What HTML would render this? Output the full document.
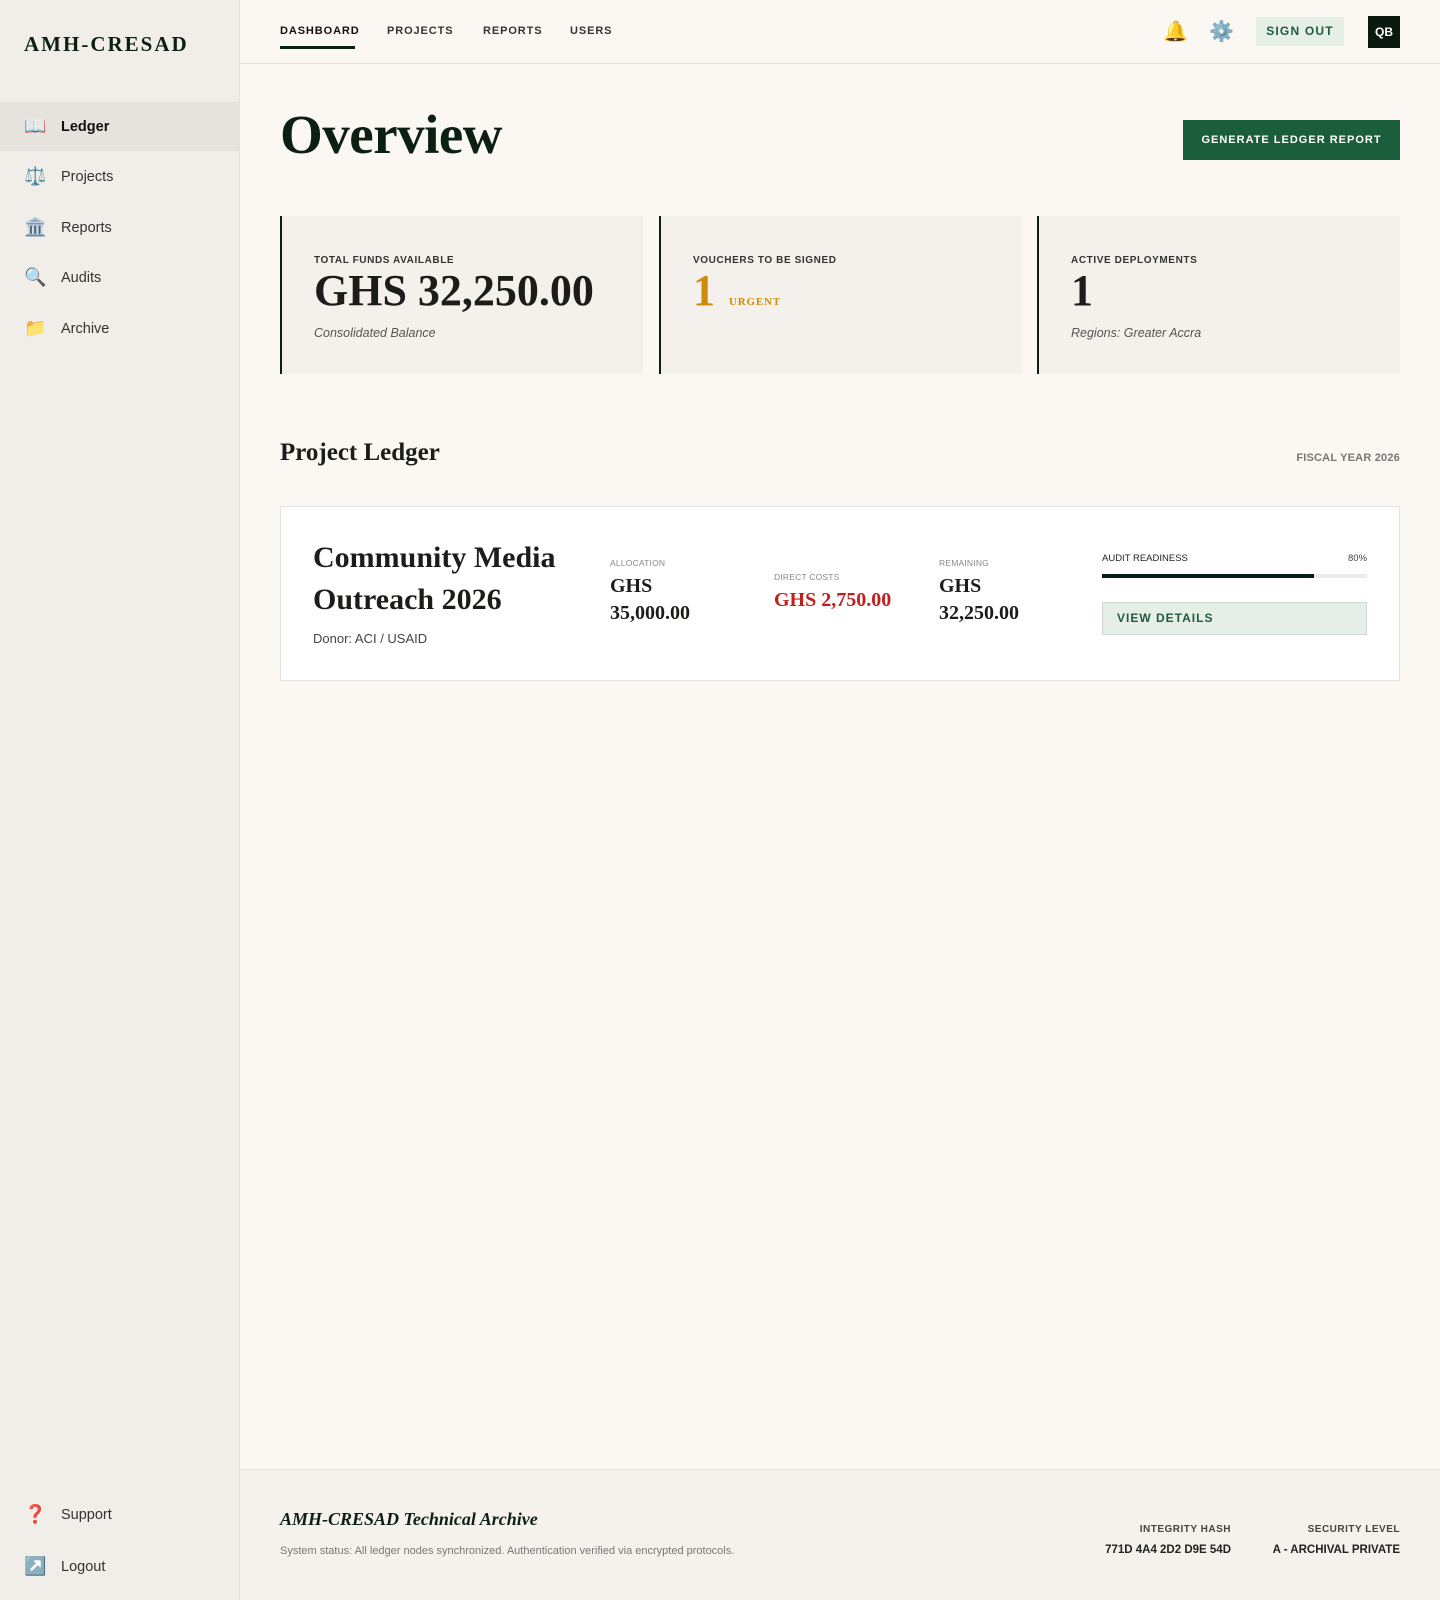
<!DOCTYPE html>
<html><head><meta charset="utf-8"><style>
*{margin:0;padding:0;box-sizing:border-box}
body{width:1440px;height:1600px;background:#fbf8f4;font-family:"Liberation Sans",sans-serif;color:#1c1c1a;position:relative;overflow:hidden}
.abs{position:absolute}
.side{left:0;top:0;width:240px;height:1600px;background:#f1eeea;border-right:1px solid #e3e0db}
.logo{left:24px;top:32px;font-family:"Liberation Serif",serif;font-weight:bold;font-size:21px;letter-spacing:2px;color:#0c1f13}
.nav{left:0;width:240px;height:49px;display:flex;align-items:center;padding-left:24px;font-size:14.5px;color:#333}
.nav .ic{width:20px;font-size:18px;margin-right:17px;text-align:center}
.nav.act{background:#e6e3de;font-weight:bold;color:#111}
.top{left:240px;top:0;width:1200px;height:64px;border-bottom:1px solid #e4e1dc}
.tn{top:25px;font-size:11px;letter-spacing:.9px;color:#333;font-weight:bold}
.serif{font-family:"Liberation Serif",serif;font-weight:bold}
.card{top:216px;width:363px;height:158px;background:#f4f1ec;border-left:2px solid #0c1f13;padding:33px 32px}
.lab{font-size:10px;font-weight:bold;letter-spacing:.6px;color:#333}
.sub{font-size:12.5px;font-style:italic;color:#555}
.small{font-size:8.5px;color:#888;letter-spacing:.2px}
.val{font-family:"Liberation Serif",serif;font-weight:bold;font-size:20px;line-height:27px}
</style></head><body>
<div class="abs side"></div>
<div class="abs logo">AMH-CRESAD</div>
<div class="abs nav act" style="top:102px"><span class="ic">📖</span>Ledger</div>
<div class="abs nav" style="top:152px"><span class="ic">⚖️</span>Projects</div>
<div class="abs nav" style="top:203px"><span class="ic">🏛️</span>Reports</div>
<div class="abs nav" style="top:253px"><span class="ic">🔍</span>Audits</div>
<div class="abs nav" style="top:304px"><span class="ic">📁</span>Archive</div>
<div class="abs nav" style="top:1490px"><span class="ic" style="color:#d33">❓</span>Support</div>
<div class="abs nav" style="top:1542px"><span class="ic">↗️</span>Logout</div>

<div class="abs top"></div>
<div class="abs tn" style="left:280px;color:#111">DASHBOARD</div>
<div class="abs" style="left:280px;top:46px;width:75px;height:3px;background:#0c1f13"></div>
<div class="abs tn" style="left:387px">PROJECTS</div>
<div class="abs tn" style="left:483px">REPORTS</div>
<div class="abs tn" style="left:570px">USERS</div>
<div class="abs" style="left:1163px;top:19px;font-size:20px">🔔</div>
<div class="abs" style="left:1209px;top:19px;font-size:20px">⚙️</div>
<div class="abs" style="left:1256px;top:17px;width:88px;height:29px;background:#e6eee8;color:#1f5c3a;font-size:12px;font-weight:bold;letter-spacing:1.2px;text-align:center;line-height:29px">SIGN OUT</div>
<div class="abs" style="left:1368px;top:16px;width:32px;height:32px;background:#0a1a10;color:#fff;font-size:12px;font-weight:bold;text-align:center;line-height:32px">QB</div>

<div class="abs serif" style="left:280px;top:103px;font-size:55px;color:#0c1f13;letter-spacing:-.5px">Overview</div>
<div class="abs" style="left:1183px;top:120px;width:217px;height:40px;background:#1b5e3b;color:#fff;font-size:11px;font-weight:bold;letter-spacing:1px;text-align:center;line-height:40px">GENERATE LEDGER REPORT</div>

<div class="abs card" style="left:280px"><div class="lab" style="margin-top:6px">TOTAL FUNDS AVAILABLE</div><div class="serif" style="font-size:44px;line-height:46px;margin-top:2px">GHS 32,250.00</div><div class="sub" style="margin-top:12px">Consolidated Balance</div></div>
<div class="abs card" style="left:659px"><div class="lab" style="margin-top:6px">VOUCHERS TO BE SIGNED</div><div style="margin-top:2px"><span class="serif" style="font-size:44px;line-height:46px;color:#d18b0c">1</span><span class="serif" style="font-size:11px;color:#d18b0c;letter-spacing:.8px;margin-left:14px">URGENT</span></div></div>
<div class="abs card" style="left:1037px"><div class="lab" style="margin-top:6px">ACTIVE DEPLOYMENTS</div><div class="serif" style="font-size:44px;line-height:46px;margin-top:2px">1</div><div class="sub" style="margin-top:12px">Regions: Greater Accra</div></div>

<div class="abs serif" style="left:280px;top:439px;font-size:25px">Project Ledger</div>
<div class="abs" style="right:40px;top:452px;font-size:11px;color:#777;letter-spacing:.2px;font-weight:bold">FISCAL YEAR 2026</div>

<div class="abs" style="left:280px;top:506px;width:1120px;height:175px;background:#fff;border:1px solid #e6e4e0"></div>
<div class="abs serif" style="left:313px;top:537px;font-size:30px;line-height:42px;width:270px">Community Media Outreach 2026</div>
<div class="abs" style="left:313px;top:631px;font-size:13px;color:#444">Donor: ACI / USAID</div>
<div class="abs small" style="left:610px;top:558px">ALLOCATION</div>
<div class="abs val" style="left:610px;top:573px">GHS<br>35,000.00</div>
<div class="abs small" style="left:774px;top:572px">DIRECT COSTS</div>
<div class="abs val" style="left:774px;top:587px;color:#c21e1e">GHS 2,750.00</div>
<div class="abs small" style="left:939px;top:558px">REMAINING</div>
<div class="abs val" style="left:939px;top:573px">GHS<br>32,250.00</div>
<div class="abs" style="left:1102px;top:553px;font-size:9.5px;color:#222">AUDIT READINESS</div>
<div class="abs" style="left:1348px;top:553px;font-size:9.5px;color:#444">80%</div>
<div class="abs" style="left:1102px;top:574px;width:265px;height:4px;background:#eeebe6"><div style="width:80%;height:4px;background:#0c1f13"></div></div>
<div class="abs" style="left:1102px;top:602px;width:265px;height:33px;background:#e6eee8;border:1px solid #d0d6d2;color:#1f5c3a;font-size:12px;font-weight:bold;letter-spacing:1px;line-height:31px;padding-left:14px">VIEW DETAILS</div>

<div class="abs" style="left:240px;top:1469px;width:1200px;height:131px;background:#f5f2ed;border-top:1px solid #e4e1dc"></div>
<div class="abs" style="left:280px;top:1509px;font-family:'Liberation Serif',serif;font-style:italic;font-weight:bold;font-size:18px;color:#0c1f13">AMH-CRESAD Technical Archive</div>
<div class="abs" style="left:280px;top:1545px;font-size:11px;color:#777">System status: All ledger nodes synchronized. Authentication verified via encrypted protocols.</div>
<div class="abs" style="right:209px;top:1524px;font-size:10px;font-weight:bold;color:#444;letter-spacing:.5px;text-align:right">INTEGRITY HASH</div>
<div class="abs" style="right:209px;top:1544px;font-size:11.5px;font-weight:bold;color:#222;text-align:right">771D 4A4 2D2 D9E 54D</div>
<div class="abs" style="right:40px;top:1524px;font-size:10px;font-weight:bold;color:#444;letter-spacing:.5px;text-align:right">SECURITY LEVEL</div>
<div class="abs" style="right:40px;top:1544px;font-size:11.5px;font-weight:bold;color:#222;text-align:right">A - ARCHIVAL PRIVATE</div>
</body></html>
